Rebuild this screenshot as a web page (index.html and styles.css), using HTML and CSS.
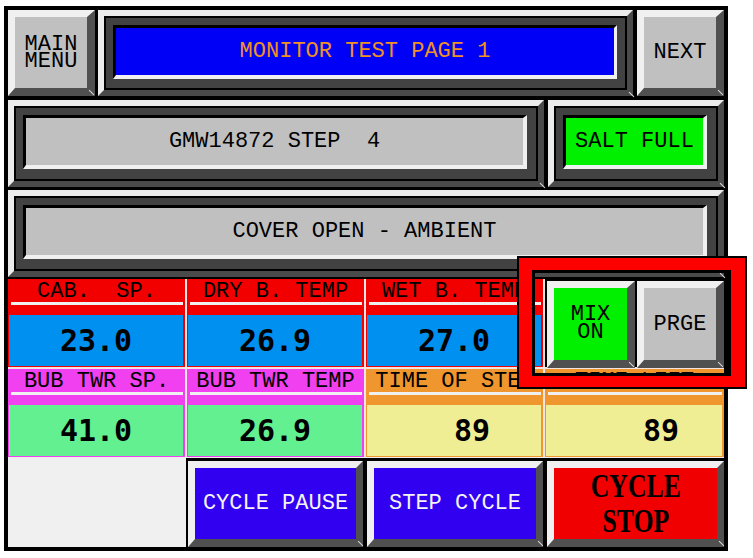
FILE: index.html
```html
<!DOCTYPE html>
<html lang="en">
<head>
<meta charset="utf-8">
<title>Monitor Test Page 1</title>
<link rel="stylesheet" href="styles.css">
</head>
<body>
<div class="hmi">
  <div class="row row-top">
    <div class="btn btn-menu">MAIN
MENU</div>
    <div class="frame frame-title"><div class="well"><div class="screen screen-title">MONITOR TEST PAGE 1</div></div></div>
    <div class="btn btn-next">NEXT</div>
  </div>

  <div class="row row-step">
    <div class="frame frame-step"><div class="well"><div class="screen">GMW14872 STEP  4</div></div></div>
    <div class="frame frame-salt"><div class="well"><div class="screen screen-ok">SALT FULL</div></div></div>
  </div>

  <div class="row row-status">
    <div class="frame frame-status"><div class="well"><div class="screen">COVER OPEN - AMBIENT</div></div></div>
  </div>

  <div class="readings">
    <div class="cell cell-sp">
      <div class="cell-label">CAB.  SP.</div>
      <div class="cell-rule"></div>
      <div class="cell-value">23.0</div>
    </div>
    <div class="cell cell-sp">
      <div class="cell-label">DRY B. TEMP</div>
      <div class="cell-rule"></div>
      <div class="cell-value">26.9</div>
    </div>
    <div class="cell cell-sp">
      <div class="cell-label">WET B. TEMP</div>
      <div class="cell-rule"></div>
      <div class="cell-value">27.0</div>
    </div>
    <div class="cell-controls">
      <div class="btn btn-mix">MIX
ON</div>
      <div class="btn btn-purge">PRGE</div>
    </div>

    <div class="cell cell-twr">
      <div class="cell-label">BUB TWR SP.</div>
      <div class="cell-rule"></div>
      <div class="cell-value">41.0</div>
    </div>
    <div class="cell cell-twr">
      <div class="cell-label">BUB TWR TEMP</div>
      <div class="cell-rule"></div>
      <div class="cell-value">26.9</div>
    </div>
    <div class="cell cell-time">
      <div class="cell-label">TIME OF STEP</div>
      <div class="cell-rule"></div>
      <div class="cell-value">  89</div>
    </div>
    <div class="cell cell-time">
      <div class="cell-label">TIME LEFT</div>
      <div class="cell-rule"></div>
      <div class="cell-value">   89</div>
    </div>
  </div>

  <div class="actions">
    <div class="actions-blank"></div>
    <div class="btn btn-action btn-pause">CYCLE PAUSE</div>
    <div class="btn btn-action btn-step">STEP CYCLE</div>
    <div class="btn btn-action btn-stop"><span class="stop-label">CYCLE
STOP</span></div>
  </div>

  <div class="callout"></div>
</div>
</body>
</html>
```

FILE: styles.css
```css
* {
  box-sizing: border-box;
}

body {
  margin: 0;
  background: #ffffff;
  font-family: "Liberation Mono", "DejaVu Sans Mono", monospace;
  color: #000;
}

/* operator panel */
.hmi {
  position: relative;
  width: 724px;
  height: 545px;
  margin: 6px 0 0 4px;
  border: 4px solid #000;
  background: #000;
  display: flex;
  flex-direction: column;
}

.row {
  display: flex;
}

.row-top {
  height: 86px;
}

.row-step {
  height: 87px;
  margin-top: 4px;
}

.row-status {
  height: 87px;
  margin-top: 3px;
}

/* raised push button */
.btn {
  position: relative;
  display: flex;
  align-items: center;
  justify-content: center;
  text-align: center;
  border-style: solid;
  border-width: 7px 8px 8px 7px;
  border-color: #f0f0f0 #505050 #505050 #f0f0f0;
  background: #c0c0c0;
  font-size: 22px;
  line-height: 17px;
  white-space: pre;
}

/* small light chamfer at the lower right corner of a raised edge */
.btn::after,
.frame::after {
  content: "";
  position: absolute;
  right: -8px;
  bottom: -5px;
  width: 7px;
  height: 1px;
  background: #d8d8d8;
  transform: rotate(45deg);
}

.btn-menu {
  width: 87px;
}

.btn-next {
  width: 87px;
  margin-left: 4px;
}

/* framed display window */
.frame {
  position: relative;
  border: 6px solid;
  border-color: #ececec #4a4a4a #4a4a4a #ececec;
  background: #444;
}

.well {
  height: 100%;
  border: 2px solid #000;
  background: #424242;
  padding: 7px 9px 10px 7px;
}

.screen {
  height: 100%;
  border-style: solid;
  border-width: 3px 4px 4px 3px;
  border-color: #000 #f0f0f0 #f0f0f0 #000;
  background: #c0c0c0;
  display: flex;
  align-items: center;
  justify-content: center;
  font-size: 22px;
  white-space: pre;
}

.frame-title {
  width: 535px;
  margin-left: 3px;
}

.frame-title .well {
  padding: 7px 8px 9px 7px;
}

.frame-title .screen {
  border-width: 3px 3px 4px 3px;
  background: #0000f6;
  color: #f0921e;
}

.frame-step {
  width: 536px;
}

.frame-salt {
  width: 176px;
  margin-left: 4px;
}

.screen-ok {
  background: #00f000;
}

.frame-status {
  width: 716px;
}

/* process readings */
.readings {
  margin-top: 2px;
  display: grid;
  grid-template-columns: 177px 177px 177px 179px;
  grid-template-rows: 88px 88px;
  column-gap: 2px;
  row-gap: 2px;
  background: #f3e4e4;
}

.cell {
  display: flex;
  flex-direction: column;
  background: var(--band);
}

.cell-sp {
  --band: #f20000;
  --fill: #0090f0;
}

.cell-twr {
  --band: #f040f0;
  --fill: #62f090;
}

.cell-time {
  --band: #f0962e;
  --fill: #f0ee94;
}

.cell-label {
  height: 23px;
  line-height: 25px;
  text-align: center;
  font-size: 22px;
  white-space: pre;
}

.cell-rule {
  height: 3px;
  margin: 0 2px 0 3px;
  background: #f0f0f0;
}

.cell-value {
  margin: 10px 2px 1px 1px;
  flex: 1;
  background: var(--fill);
  display: flex;
  align-items: center;
  justify-content: center;
  font-family: "DejaVu Sans Mono", "Liberation Mono", monospace;
  font-weight: bold;
  font-size: 30px;
  white-space: pre;
}

.cell-controls {
  display: flex;
  gap: 2px;
  padding: 2px 0 0 2px;
  background: #000;
}

.btn-mix {
  width: 88px;
  height: 87px;
  background: #00f000;
  line-height: 18px;
}

.btn-purge {
  width: 87px;
  height: 87px;
}

/* cycle controls */
.actions {
  display: flex;
  flex: 1;
  border-top: 1px solid #eeeeee;
  background: #000;
}

.actions-blank {
  width: 178px;
  margin-right: 2px;
  background: #f0f0f0;
}

.btn-action {
  margin-top: 3px;
  border-width: 7px 7px 8px 7px;
}

.btn-pause {
  width: 175px;
  background: #3200f0;
  color: #f4f4f4;
}

.btn-step {
  width: 176px;
  margin-left: 4px;
  background: #3200f0;
  color: #f4f4f4;
}

.btn-stop {
  width: 177px;
  margin-left: 4px;
  background: #f00000;
}

.stop-label {
  display: inline-block;
  font-family: "Liberation Serif", "DejaVu Serif", serif;
  font-weight: bold;
  font-size: 33px;
  line-height: 35px;
  transform: scaleX(0.78);
}

/* highlight box drawn over the mix / purge controls */
.callout {
  position: absolute;
  left: 511px;
  top: 248px;
  width: 226px;
  height: 129px;
  border-style: solid;
  border-color: #ff0000;
  border-width: 12px 14px 11px 13px;
  outline: 2px solid #000;
  box-shadow: inset 0 0 0 3px #000;
}
```
